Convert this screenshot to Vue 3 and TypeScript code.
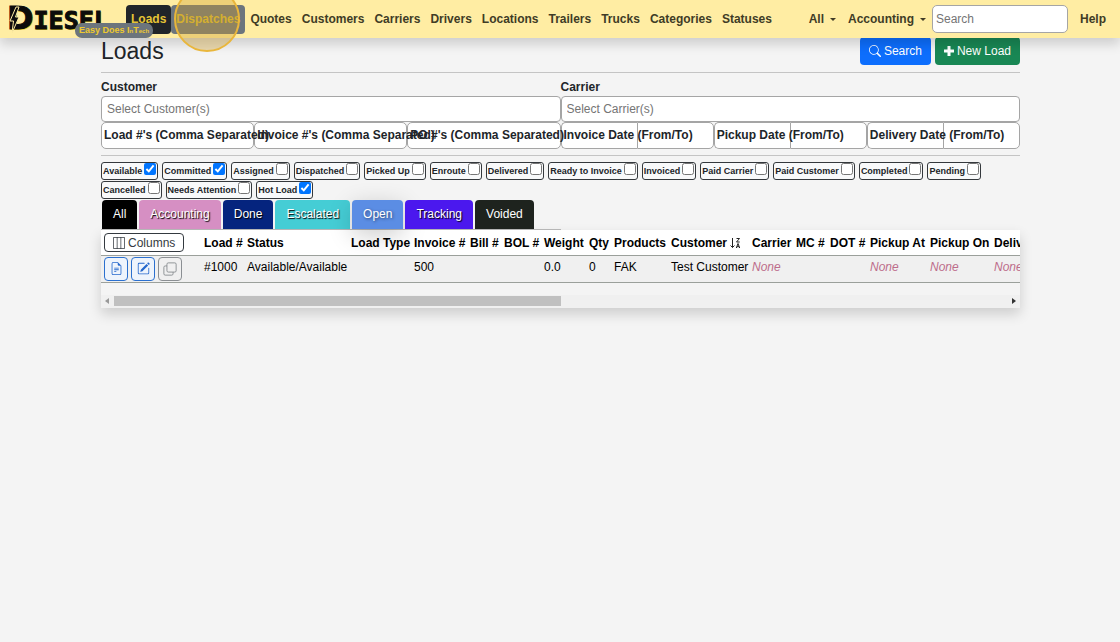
<script setup lang="ts">
import { ref } from 'vue'

interface Filter { label: string; on: boolean }
interface Column { title: string; width: number; value?: string; none?: boolean; sorted?: boolean }

const links: string[] = ['Loads', 'Dispatches', 'Quotes', 'Customers', 'Carriers', 'Drivers', 'Locations', 'Trailers', 'Trucks', 'Categories', 'Statuses']
const textFilters: string[] = ["Load #'s (Comma Separated)", "Invoice #'s (Comma Separated)", "PO #'s (Comma Separated)"]
const dateFilters: string[] = ['Invoice Date (From/To)', 'Pickup Date (From/To)', 'Delivery Date (From/To)']

const on = ['Available', 'Committed', 'Hot Load']
const filters = ref<Filter[]>(
  ['Available', 'Committed', 'Assigned', 'Dispatched', 'Picked Up', 'Enroute', 'Delivered', 'Ready to Invoice', 'Invoiced',
    'Paid Carrier', 'Paid Customer', 'Completed', 'Pending', 'Cancelled', 'Needs Attention', 'Hot Load']
    .map((label) => ({ label, on: on.includes(label) })),
)

const tabs: string[] = ['All', 'Accounting', 'Done', 'Escalated', 'Open', 'Tracking', 'Voided']

const columns: Column[] = [
  { title: 'Load #', width: 43, value: '#1000' },
  { title: 'Status', width: 104, value: 'Available/Available' },
  { title: 'Load Type', width: 63 },
  { title: 'Invoice #', width: 56, value: '500' },
  { title: 'Bill #', width: 34 },
  { title: 'BOL #', width: 40 },
  { title: 'Weight', width: 45, value: '0.0' },
  { title: 'Qty', width: 25, value: '0' },
  { title: 'Products', width: 57, value: 'FAK' },
  { title: 'Customer', width: 81, value: 'Test Customer', sorted: true },
  { title: 'Carrier', width: 44, none: true },
  { title: 'MC #', width: 34 },
  { title: 'DOT #', width: 40 },
  { title: 'Pickup At', width: 60, none: true },
  { title: 'Pickup On', width: 64, none: true },
  { title: 'Delivery At', width: 70, none: true },
]
</script>

<template>
  <div class="page">
    <header class="bar">
      <a href="#" class="brand" aria-label="Diesel">
        <span class="word"><span class="big">D</span>IESEL</span>
        <svg class="bolt" viewBox="0 0 12 28" aria-hidden="true">
          <path d="M7 2 L1 16 L4.500 16 L3 28 L10 12 L6.500 12 L10 2 Z" fill="#0c0c0c" stroke="#ffeda3" stroke-width="1" />
        </svg>
        <span class="tag">Easy Does I<small>n</small>T<small>ech</small></span>
      </a>
      <nav class="links">
        <a v-for="l in links" :key="l" href="#" :class="{ active: l === 'Loads', hover: l === 'Dispatches' }">{{ l }}<i v-if="l === 'Dispatches'" class="ring"></i></a>
      </nav>
      <div class="tools">
        <button type="button" class="drop">All</button>
        <button type="button" class="drop">Accounting</button>
        <input type="search" placeholder="Search" aria-label="Search" />
        <a href="#">Help</a>
      </div>
    </header>

    <main>
      <div class="heading">
        <h1>Loads</h1>
        <div class="actions">
          <button type="button" class="blue">
            <svg viewBox="0 0 16 16" width="12" height="12" fill="currentColor"><path d="M11.742 10.344a6.5 6.5 0 1 0-1.397 1.398h-.001q.044.06.098.115l3.85 3.85a1 1 0 0 0 1.415-1.414l-3.85-3.85a1 1 0 0 0-.115-.1zM12 6.5a5.5 5.5 0 1 1-11 0 5.5 5.5 0 0 1 11 0" /></svg>
            Search
          </button>
          <button type="button" class="green">
            <svg viewBox="0 0 10 10" width="10" height="10" fill="currentColor"><path d="M3.500 0h3v3.500H10v3H6.500V10h-3V6.500H0v-3h3.500z" /></svg>
            New Load
          </button>
        </div>
      </div>

      <form class="search" @submit.prevent>
        <div class="pickers">
          <label>Customer<input type="text" placeholder="Select Customer(s)" /></label>
          <label>Carrier<input type="text" placeholder="Select Carrier(s)" /></label>
        </div>
        <div class="six">
          <label v-for="t in textFilters" :key="t" class="float"><input type="text" /><span>{{ t }}</span></label>
          <div v-for="(t, i) in dateFilters" :key="t" class="float pair">
            <input :id="'date' + i" type="text" /><input type="text" :aria-label="t" />
            <label :for="'date' + i">{{ t }}</label>
          </div>
        </div>
      </form>

      <div class="checks">
        <label v-for="f in filters" :key="f.label">{{ f.label }}<input v-model="f.on" type="checkbox" /></label>
      </div>

      <div class="tabs">
        <button v-for="t in tabs" :key="t" type="button" :class="t.toLowerCase()">{{ t }}</button>
      </div>

      <section class="sheet">
        <div class="clip">
          <table>
            <colgroup>
              <col class="tools-col" />
              <col v-for="c in columns" :key="c.title" :style="{ width: c.width + 'px' }" />
            </colgroup>
            <thead>
              <tr>
                <th>
                  <button type="button" class="columns">
                    <svg viewBox="0 0 16 16" width="12" height="12" fill="currentColor"><path d="M0 1.5A1.5 1.5 0 0 1 1.5 0h13A1.5 1.5 0 0 1 16 1.5v13a1.5 1.5 0 0 1-1.5 1.5h-13A1.5 1.5 0 0 1 0 14.5zM1.5 1a.5.5 0 0 0-.5.5v13a.5.5 0 0 0 .5.5H5V1zM10 15V1H6v14zm1 0h3.5a.5.5 0 0 0 .5-.5v-13a.5.5 0 0 0-.5-.5H11z" /></svg>
                    Columns
                  </button>
                </th>
                <th v-for="c in columns" :key="c.title">{{ c.title }}<svg v-if="c.sorted" class="sort" viewBox="0 0 11 12" width="11" height="12" fill="none" stroke="#222" stroke-width="1"><path d="M2.500 1v9.500M.5 8.500l2 2 2-2M6.500 1.500h3L6.500 5h3.200M6.300 11l1.700-4.500L9.700 11M7 9.700h2" /></svg></th>
              </tr>
            </thead>
            <tbody>
              <tr>
                <td>
                  <div class="row-tools">
                    <button type="button" aria-label="Details"><svg viewBox="0 0 16 16" width="13" height="13" fill="currentColor"><path d="M5.500 7a.5.5 0 0 0 0 1h5a.5.5 0 0 0 0-1zM5 9.500a.5.5 0 0 1 .5-.5h5a.5.5 0 0 1 0 1h-5a.5.5 0 0 1-.5-.5m0 2a.5.5 0 0 1 .5-.5h2a.5.5 0 0 1 0 1h-2a.5.5 0 0 1-.5-.5" /><path d="M9.500 0H4a2 2 0 0 0-2 2v12a2 2 0 0 0 2 2h8a2 2 0 0 0 2-2V4.500zm0 1v2A1.500 1.500 0 0 0 11 4.500h2V14a1 1 0 0 1-1 1H4a1 1 0 0 1-1-1V2a1 1 0 0 1 1-1z" /></svg></button>
                    <button type="button" aria-label="Edit"><svg viewBox="0 0 16 16" width="13" height="13" fill="currentColor"><path d="M15.502 1.940a.5.5 0 0 1 0 .706L14.459 3.690l-2-2L13.502.646a.5.5 0 0 1 .707 0l1.293 1.293zm-1.750 2.456-2-2L4.939 9.210a.5.5 0 0 0-.121.196l-.805 2.414a.25.25 0 0 0 .316.316l2.414-.805a.5.5 0 0 0 .196-.120z" /><path fill-rule="evenodd" d="M1 13.500A1.500 1.500 0 0 0 2.500 15h11a1.500 1.500 0 0 0 1.500-1.500v-6a.5.5 0 0 0-1 0v6a.5.5 0 0 1-.5.5h-11a.5.5 0 0 1-.5-.5v-11a.5.5 0 0 1 .5-.5H9a.5.5 0 0 0 0-1H2.500A1.500 1.500 0 0 0 1 2.500z" /></svg></button>
                    <button type="button" class="grey" aria-label="Copy"><svg viewBox="0 0 16 16" width="14" height="14" fill="none" stroke="currentColor"><rect x="4.500" y="1" width="10.500" height="10.500" rx="1.500" /><path d="M4.500 4.500h-2A1.500 1.500 0 0 0 1 6v7.500A1.500 1.500 0 0 0 2.500 15H10a1.500 1.500 0 0 0 1.500-1.500v-2" /></svg></button>
                  </div>
                </td>
                <td v-for="c in columns" :key="c.title"><em v-if="c.none">None</em><template v-else>{{ c.value }}</template></td>
              </tr>
            </tbody>
          </table>
        </div>
        <div class="scroll" aria-hidden="true">
          <i class="left"></i><span class="track"><span class="thumb"></span></span><i class="right"></i>
        </div>
      </section>
    </main>
  </div>
</template>

<style>
html { background: #f4f4f4; }
</style>

<style scoped>
.page, button, input { font-family: "Liberation Sans", Arial, sans-serif; font-size: 12px; }
.page { color: #212529; line-height: 18px; overflow-x: hidden; min-height: 100vh; }
.page * { box-sizing: border-box; }
a { color: inherit; text-decoration: none; }
button { cursor: pointer; margin: 0; }
input { border: 1px solid #a5a5a5; border-radius: 4px; background: #fff; margin: 0; min-width: 0; color: #212529; }
input::placeholder { color: #757575; opacity: 1; }

.bar { position: relative; z-index: 2; display: flex; align-items: center; height: 38px; background: #ffeda3; box-shadow: 0 6px 12px rgba(0, 0, 0, .16); font-weight: bold; color: #403c26; padding-right: 14px; }
.brand { position: relative; z-index: 1; flex: none; width: 126px; height: 38px; }
.word { display: flex; align-items: baseline; padding-left: 7px; font: bold 25px/36px "DejaVu Sans Mono", monospace; color: #0c0c0c; text-shadow: 1px 1px 0 #e8c820; -webkit-text-stroke: 1px #0c0c0c; }
.big { font-family: "DejaVu Sans", sans-serif; font-size: 32px; line-height: 36px; }
.bolt { position: absolute; left: 9px; top: 5px; width: 12px; height: 28px; }
.tag { position: absolute; left: 75px; top: 23px; padding: 0 4px; border-radius: 7px; background: #6c757d; color: #ecc92f; font-size: 9px; line-height: 14px; white-space: nowrap; }
.tag small { font-size: 6px; }
.links { display: flex; flex: 1; }
.links a { position: relative; padding: 0 5px; line-height: 29px; border-radius: 4px; white-space: nowrap; }
.links .active { background: #212529; color: #e5c435; }
.links .hover { background: #6c757d; color: #d8b932; }
.ring { position: absolute; left: 3px; top: -19px; width: 66px; height: 66px; border: 2px solid #e9b63b; border-radius: 50%; background: rgba(205, 157, 45, .36); }
.tools { display: flex; align-items: center; }
.drop { display: flex; align-items: center; border: 0; background: none; color: inherit; font-weight: bold; padding: 0 6px; }
.drop::after { content: ""; margin-left: 6px; border: 3px solid transparent; border-top-color: currentColor; border-bottom: 0; }
.tools input { width: 136px; height: 28px; padding: 0 3px; margin-right: 12px; border-radius: 5px; }

main { margin: 0 100px 0 101px; }
.heading { display: flex; justify-content: space-between; align-items: center; height: 35px; padding-bottom: 8px; border-bottom: 1px solid #c4c4c4; }
h1 { margin: 0; font-size: 23px; line-height: 28px; font-weight: normal; }
.actions { display: flex; gap: 4px; }
.actions button { display: flex; align-items: center; gap: 3px; height: 28px; padding: 0 9px; border: 0; border-radius: 4px; color: #fff; white-space: nowrap; }
.blue { background: #0d6efd; }
.green { background: #198754; }

.search { padding: 5px 0 6px; border-bottom: 1px solid #c4c4c4; }
.pickers { display: grid; grid-template-columns: 1fr 1fr; font-weight: bold; }
.pickers input { display: block; width: 100%; height: 26px; padding: 0 5px; }
.six { display: grid; grid-template-columns: repeat(6, 1fr); }
.float { position: relative; display: flex; font-weight: bold; }
.float input { flex: 1; width: 0; height: 27px; border-radius: 5px; }
.float span, .float label { position: absolute; z-index: 1; left: 3px; top: 4px; white-space: nowrap; }
.pair input:first-child { border-radius: 5px 0 0 5px; border-right: 0; }
.pair input:nth-child(2) { border-radius: 0 5px 5px 0; }

.checks { display: flex; flex-wrap: wrap; gap: 1px 4px; padding: 6px 0 1px; }
.checks label { display: flex; align-items: flex-start; gap: 2px; height: 18px; padding: 0 1px; border: 1px solid #34383c; border-radius: 3px; background: #f8f9fa; font-size: 9px; font-weight: bold; line-height: 17px; white-space: nowrap; }
.checks input { width: 12px; height: 12px; }

.tabs { display: flex; gap: 2px; width: 50%; height: 30px; padding: 0 1px; border-bottom: 1px solid #bbb; white-space: nowrap; }
.tabs button { flex: none; height: 29px; padding: 0 11px 2px; border: 0; border-radius: 4px 4px 0 0; color: #fff; text-shadow: 1px 1px 1px #000; }
.tabs .all { background: #000; }
.tabs .accounting { background: #d68fc3; }
.tabs .done { background: #05247e; }
.tabs .escalated { background: #45cdd5; }
.tabs .open { background: #5b8de4; box-shadow: 0 6px 24px rgba(0, 0, 0, .2); text-shadow: 1px 1px 3px #0008; }
.tabs .tracking { background: #4b18ee; }
.tabs .voided { background: #1e231e; text-shadow: none; }

.sheet { box-shadow: 0 6px 12px rgba(0, 0, 0, .16); background: #f4f4f4; color: #000; }
.clip { overflow: hidden; }
table { width: 960px; table-layout: fixed; border-collapse: collapse; }
.tools-col { width: 100px; }
th, td { padding: 0 0 0 3px; text-align: left; white-space: nowrap; border-bottom: 1px solid #9ba09b; }
th { height: 25px; padding-top: 1px; background: #fff; }
td { height: 27px; padding-bottom: 3px; background: #f0f0f0; }
td:first-child { padding-bottom: 0; }
em { color: #bd6d8b; }
.sort { vertical-align: -2px; margin-left: 3px; }
.columns { display: flex; align-items: center; gap: 3px; height: 19px; padding: 0 8px; border: 1px solid #343a40; border-radius: 4px; background: #fff; color: #343a40; }
.row-tools { display: flex; gap: 3px; }
.row-tools button { display: flex; align-items: center; justify-content: center; width: 24px; height: 24px; padding: 0; border: 1px solid #2b70cf; border-radius: 4px; background: #eef4fc; color: #2467cc; }
.row-tools .grey { border-color: #8b8f93; background: #f0f0f0; color: #85898d; }
.scroll { display: flex; align-items: center; gap: 5px; height: 13px; margin-top: 12px; padding: 0 4px; background: #f0f0f0; }
.scroll i { border: 3px solid transparent; }
.scroll .left { border-left: 0; border-right: 4px solid #999; }
.scroll .right { border-right: 0; border-left: 4px solid #333; }
.track { flex: 1; }
.thumb { display: block; width: 50%; height: 10px; background: #c0c0c0; }
</style>
